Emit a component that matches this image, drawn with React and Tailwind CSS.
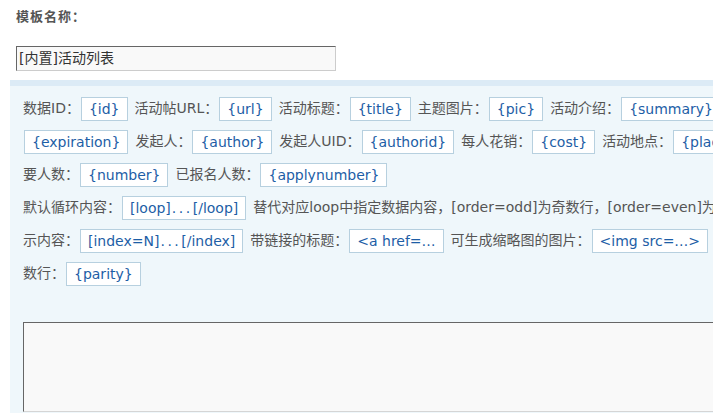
import React from 'react';

const FONT = { fontFamily: '"DejaVu Sans", "Noto Sans CJK SC", sans-serif' };

const ROWS = [
  [['数据ID：', '{id}'], ['活动帖URL：', '{url}'], ['活动标题：', '{title}'], ['主题图片：', '{pic}'], ['活动介绍：', '{summary}'], ['活动结束时间：', '']],
  [['', '{expiration}'], ['发起人：', '{author}'], ['发起人UID：', '{authorid}'], ['每人花销：', '{cost}'], ['活动地点：', '{place}'], ['活动类型：', '{class}'], ['需', '']],
  [['要人数：', '{number}'], ['已报名人数：', '{applynumber}']],
  [['默认循环内容：', ['[loop]', '[/loop]']], ['替代对应loop中指定数据内容，[order=odd]为奇数行，[order=even]为偶数行，[index=N]指定第N条数据的显', '']],
  [['示内容：', ['[index=N]', '[/index]']], ['带链接的标题：', '<a href=…'], ['可生成缩略图的图片：', '<img src=…>'], ['奇偶', '']],
  [['数行：', '{parity}']],
];

function Tag({ children }) {
  const content = Array.isArray(children) ? (
    <>
      {children[0]}
      <span className="tracking-[2.5px] ml-[1px]">...</span>
      {children[1]}
    </>
  ) : children;
  return (
    <span className="inline-block h-[24px] leading-[22px] px-[7px] ml-[1px] mr-[7px] border border-[#b7d0df] bg-white text-[#1d5ea6] shrink-0">
      {content}
    </span>
  );
}

export default function App() {
  return (
    <div className="w-[713px] h-[413px] overflow-hidden bg-white text-[14px]" style={FONT}>
      <div className="pl-[16px] pt-[9px] h-[46px]">
        <p className="text-[13px] font-bold tracking-[1px] text-[#555] leading-[16px]">模板名称：</p>
      </div>
      <div className="pl-[16px]">
        <div className="w-[320px] h-[25px] border border-t-[#666] border-l-[#666] border-r-[#ccc] border-b-[#ccc] bg-[#f9f9f9] px-[2px] leading-[23px] text-[#333]">
          [内置]活动列表
        </div>
      </div>
      <div className="ml-[10px] mt-[9px] h-[340px] overflow-hidden bg-[#eff7fb] border-t-[6px] border-[#dcebf6] pl-[13px] pt-[6px]">
        {ROWS.map((row, i) => (
          <div key={i} className="flex items-center h-[33px] whitespace-nowrap text-[#555]">
            {row.map(([label, tag], j) => (
              <React.Fragment key={j}>
                {label && <span className="shrink-0">{label}</span>}
                {tag && <Tag>{tag}</Tag>}
              </React.Fragment>
            ))}
          </div>
        ))}
        <div className="mt-[32px] w-[900px] h-[90px] border border-t-[#666] border-l-[#666] border-r-[#ccc] border-b-[#d5d5d5] bg-[#f9f9f9]" />
      </div>
    </div>
  );
}
